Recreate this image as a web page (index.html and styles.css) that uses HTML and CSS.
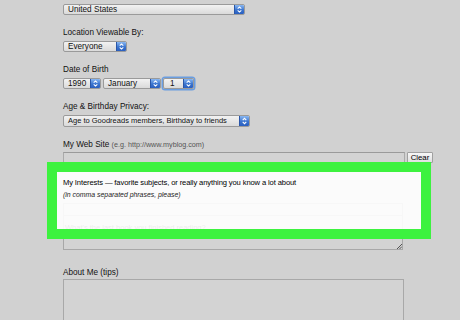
FILE: index.html
```html
<!DOCTYPE html>
<html>
<head>
<meta charset="utf-8">
<link rel="stylesheet" href="styles.css">
</head>
<body>
<div class="page">
  <div class="field first">
    <div class="lbl"></div>
    <div class="sel w-us"><span class="val">United States</span><span class="arr"><svg viewBox="0 0 10 11" width="10" height="11"><path d="M3 4.6 L5 2.6 L7 4.6 M3 6.4 L5 8.4 L7 6.4" fill="none" stroke="#fff" stroke-width="1.2"/></svg></span></div>
  </div>
  <div class="field">
    <div class="lbl">Location Viewable By:</div>
    <div class="sel w-every"><span class="val">Everyone</span><span class="arr"><svg viewBox="0 0 10 11" width="10" height="11"><path d="M3 4.6 L5 2.6 L7 4.6 M3 6.4 L5 8.4 L7 6.4" fill="none" stroke="#fff" stroke-width="1.2"/></svg></span></div>
  </div>
  <div class="field">
    <div class="lbl">Date of Birth</div>
    <div class="row">
      <div class="sel w-year"><span class="val">1990</span><span class="arr"><svg viewBox="0 0 10 11" width="10" height="11"><path d="M3 4.6 L5 2.6 L7 4.6 M3 6.4 L5 8.4 L7 6.4" fill="none" stroke="#fff" stroke-width="1.2"/></svg></span></div>
      <div class="sel w-month"><span class="val">January</span><span class="arr"><svg viewBox="0 0 10 11" width="10" height="11"><path d="M3 4.6 L5 2.6 L7 4.6 M3 6.4 L5 8.4 L7 6.4" fill="none" stroke="#fff" stroke-width="1.2"/></svg></span></div>
      <div class="sel w-day focus"><span class="val day">1</span><span class="arr"><svg viewBox="0 0 10 11" width="10" height="11"><path d="M3 4.6 L5 2.6 L7 4.6 M3 6.4 L5 8.4 L7 6.4" fill="none" stroke="#fff" stroke-width="1.2"/></svg></span></div>
    </div>
  </div>
  <div class="field">
    <div class="lbl">Age &amp; Birthday Privacy:</div>
    <div class="sel w-age tall"><span class="val small">Age to Goodreads members, Birthday to friends</span><span class="arr"><svg viewBox="0 0 10 12" width="10" height="12"><path d="M3 5 L5 3 L7 5 M3 7 L5 9 L7 7" fill="none" stroke="#fff" stroke-width="1.2"/></svg></span></div>
  </div>
  <div class="field">
    <div class="lbl web-lbl">My Web Site <span class="eg">(e.g. http://www.myblog.com)</span></div>
    <div class="row web-row">
      <div class="input"></div>
      <div class="btn">Clear</div>
    </div>
  </div>
  <div class="interests">
    <div class="highlight"></div>
    <div class="lbl over title">My Interests — favorite subjects, or really anything you know a lot about</div>
    <div class="hint over">(in comma separated phrases, please)</div>
    <div class="ta">
      <div class="ta-line"></div>
      <div class="ta-text">What's the last book you finished reading?</div>
      <svg class="grip" viewBox="0 0 6 6" width="6" height="6"><path d="M1 6 L6 1 M3.5 6 L6 3.5" stroke="#444" stroke-width="0.9"/></svg>
    </div>
  </div>
  <div class="about">
    <div class="lbl about-lbl">About Me (tips)</div>
    <div class="ta2"></div>
  </div>
</div>
</body>
</html>
```

FILE: styles.css
```css
* { box-sizing: border-box; }
html, body { height: 100%; }
body {
  margin: 0;
  background: #d1d1d1;
  font-family: "Liberation Sans", Arial, sans-serif;
  font-size: 8.2px;
  color: #111;
  overflow: hidden;
}
.page {
  padding-left: 63px;
  margin-top: -9px;
}
.field { margin-bottom: 13px; }
.lbl {
  display: block;
  height: 10px;
  line-height: 10px;
  margin-bottom: 3px;
  white-space: nowrap;
}
.web-lbl { margin-bottom: 2px; }
.eg { font-size: 7.2px; color: #555; }
.row { display: flex; gap: 2px; }
.sel {
  display: flex;
  align-items: stretch;
  height: 11px;
  border: 1px solid #9a9a9a;
  border-radius: 2px;
  background: linear-gradient(#f2f2f2, #dadada);
  overflow: hidden;
}
.sel.tall { height: 12px; }
.sel .val {
  flex: 1;
  padding-left: 4px;
  line-height: 9px;
  white-space: nowrap;
  overflow: hidden;
}
.sel .val.small { font-size: 7.5px; }
.sel.tall .val { line-height: 10px; }
.sel .val.day { padding-left: 6px; }
.sel .arr {
  width: 10px;
  flex: none;
  display: flex;
  align-items: center;
  justify-content: center;
  background: linear-gradient(#8ab8f2, #3a74cf 55%, #2a5fbf);
  border-left: 1px solid #2a56a8;
}
.sel .arr svg { display: block; }
.w-us { width: 182px; }
.w-every { width: 64px; }
.w-year { width: 38px; }
.w-month { width: 58px; }
.w-day { width: 31px; }
.w-age { width: 187px; }
.sel.focus { box-shadow: 0 0 0 1.5px #6a9de0; }
.web-row { align-items: flex-start; }
.input {
  width: 342px;
  height: 13px;
  border: 1px solid #aaaaaa;
  border-top-color: #9a9a9a;
  background: #d3d3d3;
}
.btn {
  width: 26px;
  height: 11px;
  border: 1px solid #a0a0a0;
  border-radius: 1px;
  background: linear-gradient(#f7f7f7, #e0e0e0);
  font-size: 7.8px;
  line-height: 9px;
  text-align: center;
  color: #000;
}
.interests {
  position: relative;
  margin-bottom: 18px;
}
.highlight {
  position: absolute;
  left: -16px;
  top: -16px;
  width: 384px;
  height: 77px;
  border: 10px solid #3df23f;
  background: rgba(255, 255, 255, 0.9);
  z-index: 1;
}
.over { position: relative; z-index: 2; }
.title { font-size: 7.6px; letter-spacing: -0.12px; color: #000; }
.hint {
  height: 10px;
  line-height: 10px;
  margin-top: -1px;
  font-size: 6.9px;
  font-style: italic;
  color: #222;
}
.ta {
  position: relative;
  margin-top: 3px;
  width: 340px;
  height: 47px;
  border: 1px solid #a8a8a8;
  background: #d3d3d3;
}
.ta-line {
  margin-top: 11px;
  border-top: 1px solid #a8a8a8;
}
.ta-text {
  margin-top: 7px;
  padding-left: 1px;
  font-size: 7.5px;
  color: #444;
  white-space: nowrap;
}
.grip {
  position: absolute;
  right: 0;
  bottom: 0;
}
.about-lbl { margin-bottom: 1px; }
.ta2 {
  width: 341px;
  height: 60px;
  border: 1px solid #a8a8a8;
  background: #d3d3d3;
}
```
